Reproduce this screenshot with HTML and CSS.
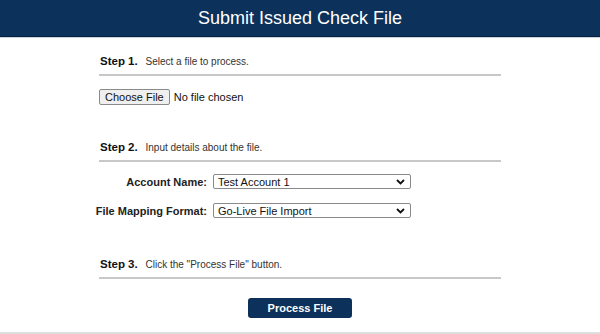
FILE: index.html
```html
<!DOCTYPE html>
<html lang="en">
<head>
  <meta charset="UTF-8">
  <meta name="viewport" content="width=device-width, initial-scale=1.0">
  <title>Submit Issued Check File</title>
  <link rel="stylesheet" href="styles.css">
</head>
<body>

  <header class="topbar">
    <h1>Submit Issued Check File</h1>
  </header>

  <main>
    <section class="step">
      <div class="step-head"><b>Step 1.</b> Select a file to process.</div>
      <div class="step-body">
        <span class="file-btn">Choose File</span>
        <span class="file-name">No file chosen</span>
      </div>
    </section>

    <section class="step step2">
      <div class="step-head"><b>Step 2.</b> Input details about the file.</div>
      <div class="form-grid">
        <label>Account Name:</label>
        <div class="select"><span>Test Account 1</span>
          <svg width="9" height="6" viewBox="0 0 9 6"><path d="M1 1l3.5 3.5L8 1" fill="none" stroke="#111" stroke-width="1.8"/></svg>
        </div>
        <label>File Mapping Format:</label>
        <div class="select"><span>Go-Live File Import</span>
          <svg width="9" height="6" viewBox="0 0 9 6"><path d="M1 1l3.5 3.5L8 1" fill="none" stroke="#111" stroke-width="1.8"/></svg>
        </div>
      </div>
    </section>

    <section class="step step3">
      <div class="step-head"><b>Step 3.</b> Click the "Process File" button.</div>
      <div class="actions">
        <span class="process-btn">Process File</span>
      </div>
    </section>
  </main>

  <div class="bottom-rule"></div>

</body>
</html>
```

FILE: styles.css
```css
body {
  margin: 0;
  font-family: "Liberation Sans", Arial, sans-serif;
  color: #222;
  background-color: white;
}
.topbar {
  background-color: #0c325b;
  height: 36px;
  border-bottom: 1px solid #07203d;
  box-shadow: 0 1px 0 #c9d3de;
  display: flex;
  align-items: center;
  justify-content: center;
}
.topbar h1 {
  margin: 0;
  color: white;
  font-size: 18px;
  font-weight: normal;
}
main {
  width: 402px;
  margin: 0 auto;
  padding-top: 18px;
}
.step-head {
  font-size: 10px;
  color: #333;
  padding-left: 1px;
  padding-bottom: 7px;
  border-bottom: 2px solid #c8c8c8;
}
.step-head b {
  font-size: 11.5px;
  color: #111;
  margin-right: 5px;
}
.step-body {
  padding-top: 13px;
  display: flex;
  align-items: center;
  font-size: 11px;
  color: #111;
}
.file-btn {
  display: inline-block;
  background-color: #efefef;
  border: 1px solid #8a8a8a;
  border-radius: 2px;
  padding: 1px 5px;
  font-size: 11px;
  margin-right: 4px;
}
.step2 {
  margin-top: 36px;
}
.form-grid {
  display: grid;
  grid-template-columns: 114px 198px;
  column-gap: 6px;
  row-gap: 14px;
  align-items: center;
  margin-left: -6px;
  padding-top: 12px;
}
.form-grid label {
  text-align: right;
  white-space: nowrap;
  font-size: 11px;
  font-weight: bold;
  color: #222;
}
.select {
  display: flex;
  align-items: center;
  justify-content: space-between;
  border: 1px solid #8a8a8a;
  border-radius: 2px;
  height: 13px;
  padding: 0 5px 0 4px;
  font-size: 11px;
  color: #111;
}
.step3 {
  margin-top: 40px;
}
.actions {
  display: flex;
  justify-content: center;
  padding-top: 19px;
}
.process-btn {
  display: inline-block;
  width: 104px;
  height: 20px;
  line-height: 20px;
  text-align: center;
  background-color: #0c325b;
  color: white;
  font-size: 11px;
  font-weight: bold;
  border-radius: 3px;
}
.bottom-rule {
  margin-top: 14px;
  height: 3px;
  background-color: #dedede;
}
```
